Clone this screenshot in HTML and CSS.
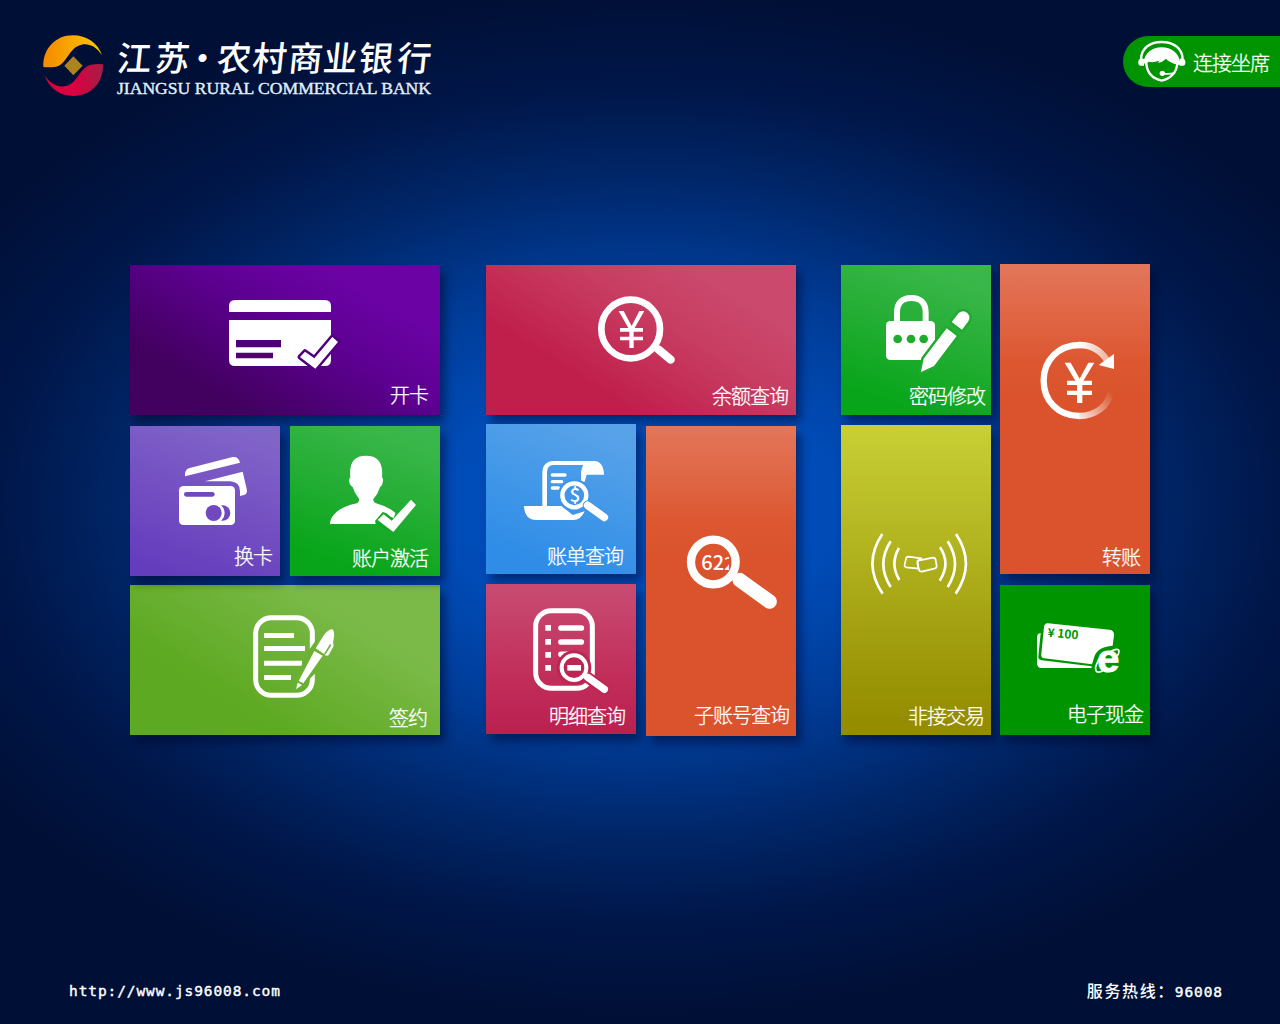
FILE: index.html
```html
<!DOCTYPE html>
<html lang="zh-CN">
<head>
<meta charset="utf-8">
<title>江苏农村商业银行</title>
<link rel="stylesheet" href="styles.css">
</head>
<body>
<header class="header">
  <svg class="logo" viewBox="0 0 1260 270" role="img" aria-label="江苏农村商业银行">
    <defs>
      <linearGradient id="gold"><stop offset="0" stop-color="#f58a00"/><stop offset="1" stop-color="#fcc800"/></linearGradient>
      <linearGradient id="red"><stop offset="0" stop-color="#d8003c"/><stop offset=".5" stop-color="#dc0040"/><stop offset="1" stop-color="#a51d45"/></linearGradient>
    </defs>
    <path fill="url(#gold)" d="M40 141C38 86 77 46 128 46C172 46 204 70 216 106C198 77 174 69 154 74C116 82 111 134 78 140Q60 143 40 141Z"/>
    <path fill="url(#red)" d="M219 133C221 189 183 228 130 228C88 228 56 204 44 166C62 194 86 203 108 198C142 191 151 139 184 134Q202 131 219 133Z"/>
    <path fill="#ab8420" d="M130 109L158 137L130 166L103 137Z"/>
    <text class="logo-cn" transform="translate(0 154) skewX(-6)" x="258 372 462 557 664 772 876 983 1098" y="0">江苏·农村商业银行</text>
    <text class="logo-en" x="261" y="222" textLength="942" lengthAdjust="spacingAndGlyphs">JIANGSU RURAL COMMERCIAL BANK</text>
  </svg>
  <a class="agent">
    <svg class="agent-icon" viewBox="110 57 150 135">
      <path fill="none" stroke="#fff" stroke-width="7" d="M122 120C122 84 149 66 184 66S247 84 247 120"/>
      <path fill="#fff" d="M114 124Q114 117 122 116H131V137H122Q114 137 114 129ZM255 124Q255 117 247 116H238V137H247Q255 137 255 129Z"/>
      <path fill="#fff" d="M130 125C134 99 155 82 184 82S235 99 239 125L240 135Q218 133 201 121L197 116Q188 126 172 129L178 122Q157 129 145 125L135 136Z"/>
      <path fill="none" stroke="#fff" stroke-width="7" d="M138 130C140 162 160 176 184 182C208 176 228 162 231 130"/>
      <path fill="none" stroke="#fff" stroke-width="5" d="M188 161Q211 163 224 158"/><circle cx="186" cy="160" r="8" fill="#fff"/>
    </svg>
    <span>连接坐席</span>
  </a>
</header>

<main class="board">
  <section class="group">
    <a class="tile open-card">
      <svg viewBox="30 30 930 450">
        <path fill="#fff" d="M327 171V153Q327 135 345 135H615Q633 135 633 153V171ZM327 195H633V315Q633 333 615 333H345Q327 333 327 315Z"/>
        <path fill="#4f0078" d="M348 255H483V277H348ZM348 293H459V310H348Z"/>
        <path class="halo" stroke="#50007d" d="M540 306L555 290L583 310L637 246L654 261L586 341Z"/>
      </svg>
      <span>开卡</span>
    </a>
    <div class="row">
      <a class="tile change-card">
        <svg viewBox="30 18 450 450">
          <path fill="#fff" d="M195 169V161Q196 148 209 144L338 111Q356 109 360 128ZM255 184L368 155L381 211Q381 223 372 225L360 228V214Q360 186 331 184Z"/>
          <rect x="177" y="198" width="168" height="117" rx="13" fill="#fff"/>
          <rect x="192" y="216" width="92" height="14" rx="7" fill="#7048c0"/>
          <circle cx="308" cy="279" r="23" fill="#7048c0"/><circle cx="284" cy="279" r="30" fill="#fff"/><circle cx="281" cy="279" r="24" fill="#7048c0"/>
        </svg>
        <span>换卡</span>
      </a>
      <a class="tile activate">
        <svg viewBox="510 18 450 450">
          <path fill="#fff" d="M630 312C630 285 663 259 705 251Q719 249 717 236Q704 221 698 201Q689 196 687 182Q688 174 691 172C687 129 701 107 738 107S790 129 786 172Q790 175 789 183Q788 196 780 202Q774 222 760 237Q759 248 772 251Q805 259 826 279L815 312Z"/>
          <path fill="#18a725" d="M765 303L788 276L800 280L812 290L835 300L822 338L768 315Z"/>
          <path fill="#fff" d="M773 300L791 283L815 302L873 239L888 255L820 336ZM795 276L818 292L826 281L808 268Z"/>
        </svg>
        <span>账户激活</span>
      </a>
    </div>
    <a class="tile sign">
      <svg viewBox="30 30 930 450">
        <rect x="407" y="128" width="170" height="233" rx="47" fill="none" stroke="#fff" stroke-width="15"/>
        <path fill="#fff" d="M432 174H522V189H432ZM432 213H555V228H432ZM432 257H546V272H432ZM432 300H513V315H432Z"/>
        <path fill="#6bb133" d="M560 235L592 190L605 245L588 293L540 340L522 347L530 305Z"/>
        <path fill="#fff" d="M583 228L608 242L550 325L536 318ZM587 220L612 180Q624 163 638 163Q646 175 639 202L641 213L626 240Q620 244 614 240L618 236L634 211L630 207L612 237ZM533 323L546 330L528 343Z"/>
      </svg>
      <span>签约</span>
    </a>
  </section>

  <section class="group queries">
    <a class="tile balance">
      <svg viewBox="18 30 930 450">
        <circle cx="452" cy="222" r="88" fill="none" stroke="#fff" stroke-width="20"/>
        <path class="line" stroke-width="25" d="M535 283L572 314"/>
        <path fill="#fff" d="M416 168H431L455 213L478 168H493L464 219H489V230H461V245H489V256H461V279H448V256H420V245H448V230H420V219H445Z"/>
      </svg>
      <span>余额查询</span>
    </a>
    <div class="row">
      <div class="stack">
        <a class="tile bill">
          <svg viewBox="18 27 450 450">
            <path fill="#fff" d="M187 273V174C187 147 203 138 222 138H342C362 138 372 155 372 179H320L314 200H303V170L309 150H220Q201 151 201 172V273H245L278 300L314 289Q303 315 280 315H169Q134 315 132 273Z"/>
            <path class="line" stroke-width="10" d="M217 180H255M217 200H245M217 219H235"/>
            <circle cx="283" cy="241" r="49" fill="#4296e7"/>
            <circle cx="283" cy="241" r="36" fill="none" stroke="#fff" stroke-width="13"/>
            <path stroke="#4296e7" stroke-width="29" stroke-linecap="round" d="M323 271L373 307"/>
            <path class="line" stroke-width="23" d="M323 271L373 307"/>
            <text x="285" y="261" class="dollar">$</text>
          </svg>
          <span>账单查询</span>
        </a>
        <a class="tile detail">
          <svg viewBox="18 507 450 450">
            <rect x="167" y="587" width="170" height="233" rx="47" fill="none" stroke="#fff" stroke-width="15"/>
            <path fill="#fff" d="M196 630h17v17h-17zM196 672h17v17h-17zM196 711h17v17h-17zM196 750h17v17h-17z"/>
            <path class="line" stroke-width="17" d="M243 639H304M243 681H304M243 718H270"/>
            <circle cx="282" cy="758" r="52" fill="#bd2553"/>
            <path stroke="#bd2553" stroke-width="34" stroke-linecap="round" d="M323 787L372 823"/>
            <circle cx="282" cy="758" r="37" fill="none" stroke="#fff" stroke-width="12"/>
            <path class="line" stroke-width="22" d="M323 787L373 823"/>
            <path fill="#fff" d="M262 750H303V767H262Z"/>
          </svg>
          <span>明细查询</span>
        </a>
      </div>
      <a class="tile sub-account">
        <svg viewBox="498 33 450 930">
          <defs><clipPath id="lens"><path d="M645 400H747V480H645Z"/></clipPath></defs>
          <circle cx="700" cy="441" r="67" fill="none" stroke="#fff" stroke-width="25"/>
          <path class="line" stroke-width="43" d="M779 495L869 560"/>
          <g clip-path="url(#lens)"><text x="664" y="465" class="digits">62<tspan class="digit-small">2</tspan></text></g>
        </svg>
        <span>子账号查询</span>
      </a>
    </div>
  </section>

  <section class="group services">
    <div class="stack">
      <a class="tile password">
        <svg viewBox="18 30 450 450">
          <path fill="none" stroke="#fff" stroke-width="18" d="M186 205V172C186 142 203 129 229 129S272 142 272 172V205"/>
          <rect x="153" y="198" width="147" height="117" rx="13" fill="#fff"/>
          <g fill="#20ab2f"><circle cx="188" cy="252" r="13"/><circle cx="228" cy="252" r="13"/><circle cx="266" cy="252" r="13"/></g>
          <path class="halo" stroke="#20ab2f" d="M335 220L365 243L297 333L258 351L266 311ZM350 201L371 174Q385 164 397 174Q408 185 400 199L381 224Z"/>
        </svg>
        <span>密码修改</span>
      </a>
      <a class="tile contactless">
        <svg viewBox="18 -225 450 930">
          <path fill="none" stroke="#fff" stroke-width="8" d="M142 102Q82 191 143 281M167 124Q123 192 167 261M192 144Q164 191 193 240M363 102Q423 191 362 281M338 124Q382 192 338 261M315 142Q348 191 314 242"/>
          <g fill="none" stroke="#fff" stroke-width="5" stroke-linejoin="round"><path d="M220 170L259 175L247 183L251 206L214 202Q207 200 209 194L213 176Q214 170 220 170Z"/><path d="M253 181L294 173Q301 173 302 180L305 198Q305 205 298 206L260 215Q253 215 251 207L247 190Q247 183 253 181Z"/></g>
        </svg>
        <span>非接交易</span>
      </a>
    </div>
    <div class="stack transfers">
      <a class="tile transfer">
        <svg viewBox="495 27 450 930">
          <defs>
            <linearGradient id="fade-top" gradientUnits="userSpaceOnUse" x1="735" y1="0" x2="828" y2="0"><stop offset="0" stop-color="#fff"/><stop offset="1" stop-color="#fff" stop-opacity=".5"/></linearGradient>
            <linearGradient id="fade-bottom" gradientUnits="userSpaceOnUse" x1="730" y1="490" x2="828" y2="410"><stop offset="0" stop-color="#fff" stop-opacity=".9"/><stop offset="1" stop-color="#fff" stop-opacity="0"/></linearGradient>
          </defs>
          <path fill="none" stroke="#fff" stroke-width="19" d="M735 270C669 270 626 317 626 377S669 483 733 483"/>
          <path fill="none" stroke="url(#fade-top)" stroke-width="19" d="M733 270Q787 270 816 316"/>
          <path fill="none" stroke="url(#fade-bottom)" stroke-width="19" d="M732 483C781 483 820 454 828 409"/>
          <path fill="#fff" d="M837 297V342L791 330Z"/>
          <path fill="#fff" d="M689 323H707L734 371L760 323H778L745 377H771V390H742V407H771V420H742V444H726V420H696V407H726V390H696V377H721Z"/>
        </svg>
        <span>转账</span>
      </a>
      <a class="tile cash">
        <svg viewBox="495 255 450 450">
          <path fill="#fff" d="M606 413Q606 400 617 399L610 470Q609 478 620 481L770 499V504H620Q606 504 606 490Z"/>
          <path fill="#fff" d="M639 370L823 389Q838 391 837 405L833 437Q785 440 777 473L771 493L628 475Q617 474 619 461L627 381Q629 369 639 370Z"/>
          <text class="money" transform="translate(637 410) rotate(5)"><tspan>¥</tspan><tspan x="29">100</tspan></text>
          <text class="browser" x="787" y="515">e</text>
          <path fill="none" stroke="#fff" stroke-width="5" d="M828 454Q849 443 852 452Q853 460 847 468M791 480Q777 503 784 514Q791 520 807 510M788 485Q797 463 826 454"/>
        </svg>
        <span>电子现金</span>
      </a>
    </div>
  </section>
</main>

<footer class="footer">
  <span class="site">http://www.js96008.com</span>
  <span class="hotline">服务热线：<b>96008</b></span>
</footer>
</body>
</html>
```
FILE: styles.css
```css
* { box-sizing: border-box; }

body {
  margin: 0;
  width: 1280px;
  height: 1024px;
  overflow: hidden;
  display: flex;
  flex-direction: column;
  color: #fff;
  font-family: "Noto Sans CJK SC", sans-serif;
  background: #000f35 radial-gradient(ellipse 710px 460px at 640px 505px, #0052c2 0%, #004bb6 28%, #003b95 50%, #002566 73%, #00174a 90%, #000f35 112%);
}

svg { display: block; }

.header {
  height: 264px;
  display: flex;
  justify-content: space-between;
  align-items: flex-start;
  padding: 20px 0 0 30px;
}
.logo { width: 420px; height: 90px; }
.logo-cn { font: 500 103px "Noto Sans CJK SC", sans-serif; fill: #fff; }
.logo-en { font: 400 51px "Liberation Serif", serif; fill: #e0eefa; stroke: #e0eefa; stroke-width: 1.2; }

.agent {
  margin-top: 16px;
  width: 157px;
  height: 51px;
  padding-left: 14px;
  display: flex;
  align-items: center;
  gap: 6px;
  border-radius: 30px 0 0 30px;
  background: #009500;
  font-size: 20px;
  font-weight: 300;
  letter-spacing: -1px;
  white-space: nowrap;
  -webkit-text-stroke: .3px #fff;
}
.agent > span { padding-top: 2px; }
.agent-icon { width: 50px; height: 45px; }

.board {
  height: 472px;
  display: flex;
  align-items: flex-start;
  gap: 45px;
  padding-left: 130px;
}
.group { width: 310px; padding-top: 1px; display: flex; flex-direction: column; }
.queries { margin-left: 1px; }
.services { flex-direction: row; gap: 9px; padding-top: 0; }
.row { display: flex; gap: 10px; z-index: 1; }
.stack { display: flex; flex-direction: column; gap: 10px; }

.tile {
  width: 150px;
  height: 150px;
  display: grid;
  flex: none;
  box-shadow: 5px 7px 9px rgba(0, 4, 40, .48);
}
.tile > svg { grid-area: 1 / 1; width: 100%; height: 100%; }
.tile > span {
  grid-area: 1 / 1;
  place-self: end;
  font-size: 20px;
  font-weight: 300;
  line-height: 24px;
  letter-spacing: -1px;
  white-space: nowrap;
  -webkit-text-stroke: .3px #fff;
}
.open-card, .sign, .balance { width: 310px; }
.sub-account, .contactless, .transfer { height: 310px; }

.open-card { background: linear-gradient(30deg, #42005f 22%, #5c0090 55%, #6a02a4 78%); }
.change-card { background: linear-gradient(20deg, #643dbd 8%, #7450c2 50%, #8164c8 90%); }
.activate { background: linear-gradient(20deg, #08a51a 15%, #25ae35 55%, #3ab74a 88%); }
.sign { background: linear-gradient(32deg, #5da921 28%, #7bba49 75%); }
.balance { background: linear-gradient(32deg, #c01f4c 28%, #c83d62 60%, #ca496c 80%); }
.bill { background: linear-gradient(22deg, #2f8de7 15%, #4197e8 50%, #58a2e9 90%); }
.detail { background: linear-gradient(0deg, #b92150, #c12c59 35%, #c84a70 95%); }
.sub-account, .transfer { background: linear-gradient(#e3765a, #dc5730 32%, #da532c 43%); }
.password { background: linear-gradient(20deg, #08a51a 15%, #25ae35 55%, #3ab74a 88%); }
.contactless { background: linear-gradient(#c8d035, #a5a313 62%, #948d00 95%); }
.cash { background: #009500; }

.row { margin-top: 11px; }
.sign { margin-top: 9px; }
.queries .row { margin-top: 9px; }
.queries .sub-account { margin-top: 2px; }
.services > .stack:first-child { padding-top: 1px; }
.transfers { gap: 11px; }

.open-card > span { padding: 0 12px 8px 0; }
.change-card > span { padding: 0 8px 8px 0; }
.activate > span { padding: 0 12px 6px 0; }
.sign > span { padding: 0 13px 5px 0; }
.balance > span { padding: 0 8px 7px 0; }
.bill > span { padding: 0 13px 6px 0; }
.detail > span { padding: 0 11px 6px 0; }
.sub-account > span { padding: 0 7px 9px 0; }
.password > span { padding: 0 6px 7px 0; }
.transfer > span { padding: 0 10px 5px 0; }
.contactless > span { padding: 0 7px 7px 0; }
.cash > span { padding: 0 7px 9px 0; }

.line { fill: none; stroke: #fff; stroke-linecap: round; }
.halo { fill: #fff; stroke-width: 15; stroke-linejoin: round; paint-order: stroke; }
.dollar { font: 500 57px "Noto Sans CJK SC", sans-serif; fill: #fff; text-anchor: middle; }
.digits { font: 500 60px "Noto Sans CJK SC", sans-serif; fill: #fff; }
.digit-small { font-size: 50px; }
.money { font: 700 36px "Noto Sans CJK SC", sans-serif; fill: #009500; }
.browser { font: 700 119px "Liberation Sans", sans-serif; fill: #fff; stroke: #fff; stroke-width: 3; }

.footer {
  margin-top: auto;
  height: 64px;
  padding: 19px 57px 0 69px;
  display: flex;
  justify-content: space-between;
  align-items: flex-start;
  line-height: 24px;
}
.site, .hotline b {
  font-family: "DejaVu Sans Mono", monospace;
  font-size: 14.5px;
  font-weight: 400;
  letter-spacing: .9px;
  -webkit-text-stroke: .4px #fff;
}
.hotline { margin-top: -1px; font-size: 16px; font-weight: 500; letter-spacing: 1.6px; }
```
